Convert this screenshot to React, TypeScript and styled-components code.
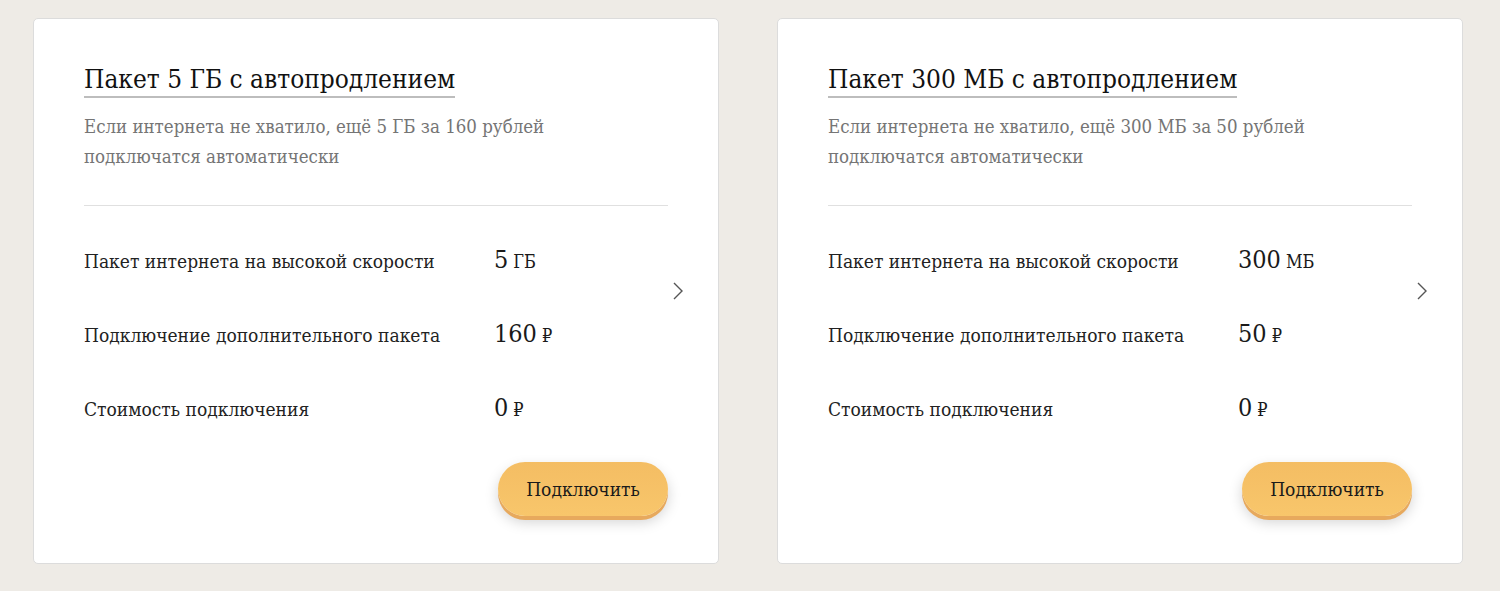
import styled, { createGlobalStyle } from "styled-components";

const GlobalStyle = createGlobalStyle`
  html, body {
    margin: 0;
    padding: 0;
    background: #eeebe6;
  }
  body {
    font-family: "DejaVu Serif Condensed", "DejaVu Serif", "Liberation Serif", serif;
    -webkit-font-smoothing: antialiased;
  }
`;

const Page = styled.div`
  display: flex;
  gap: 58px;
  padding: 18px 37px 27px 33px;
  height: 591px;
  box-sizing: border-box;
`;

const Card = styled.div`
  flex: 1;
  position: relative;
  background: #fff;
  border: 1px solid #dcdcdc;
  border-radius: 5px;
  padding: 43px 50px 0 50px;
  display: flex;
  flex-direction: column;
`;

const Title = styled.h2`
  align-self: flex-start;
  margin: 0;
  font-weight: normal;
  font-size: 26px;
  line-height: 34px;
  color: #111;
  border-bottom: 2px solid #bdbdbd;
`;

const Description = styled.p`
  margin: 14px 0 0;
  font-size: 18.5px;
  line-height: 30px;
  color: #757575;
`;

const Divider = styled.hr`
  border: 0;
  border-top: 1px solid #e0e0e0;
  margin: 33px 0 0;
`;

const Params = styled.div`
  display: flex;
  flex-direction: column;
  gap: 40px;
  padding-top: 39px;
`;

const Row = styled.div`
  display: grid;
  grid-template-columns: 410px 1fr;
  align-items: baseline;
  height: 34px;
`;

const Label = styled.span`
  font-size: 19px;
  color: #222;
`;

const Value = styled.span`
  font-size: 25px;
  color: #1a1a1a;
`;

const Unit = styled.span`
  font-size: 18px;
  margin-left: 5px;
`;

const Chevron = styled.svg`
  position: absolute;
  right: 33px;
  top: 261px;
  width: 14px;
  height: 22px;
`;

const Footer = styled.div`
  display: flex;
  justify-content: flex-end;
  margin-top: 35px;
`;

const Button = styled.button`
  width: 170px;
  height: 54px;
  border: 0;
  border-radius: 27px;
  background: linear-gradient(#f4bd63, #f8c66b);
  box-shadow: 0 4px 0 #e7a95d, 0 6px 14px rgba(0, 0, 0, 0.18);
  font-family: inherit;
  font-size: 19px;
  color: #1a1a1a;
  cursor: pointer;
`;

type Param = { label: string; value: string; unit: string };
type Pack = { title: string; description: string[]; params: Param[] };

const packs: Pack[] = [
  {
    title: "Пакет 5 ГБ с автопродлением",
    description: ["Если интернета не хватило, ещё 5 ГБ за 160 рублей", "подключатся автоматически"],
    params: [
      { label: "Пакет интернета на высокой скорости", value: "5", unit: "ГБ" },
      { label: "Подключение дополнительного пакета", value: "160", unit: "₽" },
      { label: "Стоимость подключения", value: "0", unit: "₽" },
    ],
  },
  {
    title: "Пакет 300 МБ с автопродлением",
    description: ["Если интернета не хватило, ещё 300 МБ за 50 рублей", "подключатся автоматически"],
    params: [
      { label: "Пакет интернета на высокой скорости", value: "300", unit: "МБ" },
      { label: "Подключение дополнительного пакета", value: "50", unit: "₽" },
      { label: "Стоимость подключения", value: "0", unit: "₽" },
    ],
  },
];

function PackCard({ pack }: { pack: Pack }) {
  return (
    <Card>
      <Title>{pack.title}</Title>
      <Description>
        {pack.description[0]}
        <br />
        {pack.description[1]}
      </Description>
      <Divider />
      <Params>
        {pack.params.map((p) => (
          <Row key={p.label}>
            <Label>{p.label}</Label>
            <Value>
              {p.value}
              <Unit>{p.unit}</Unit>
            </Value>
          </Row>
        ))}
      </Params>
      <Chevron viewBox="0 0 14 22">
        <path d="M3 3l8 8-8 8" fill="none" stroke="#555" strokeWidth="1.4" />
      </Chevron>
      <Footer>
        <Button>Подключить</Button>
      </Footer>
    </Card>
  );
}

export default function App() {
  return (
    <>
      <GlobalStyle />
      <Page>
        {packs.map((p) => (
          <PackCard key={p.title} pack={p} />
        ))}
      </Page>
    </>
  );
}
